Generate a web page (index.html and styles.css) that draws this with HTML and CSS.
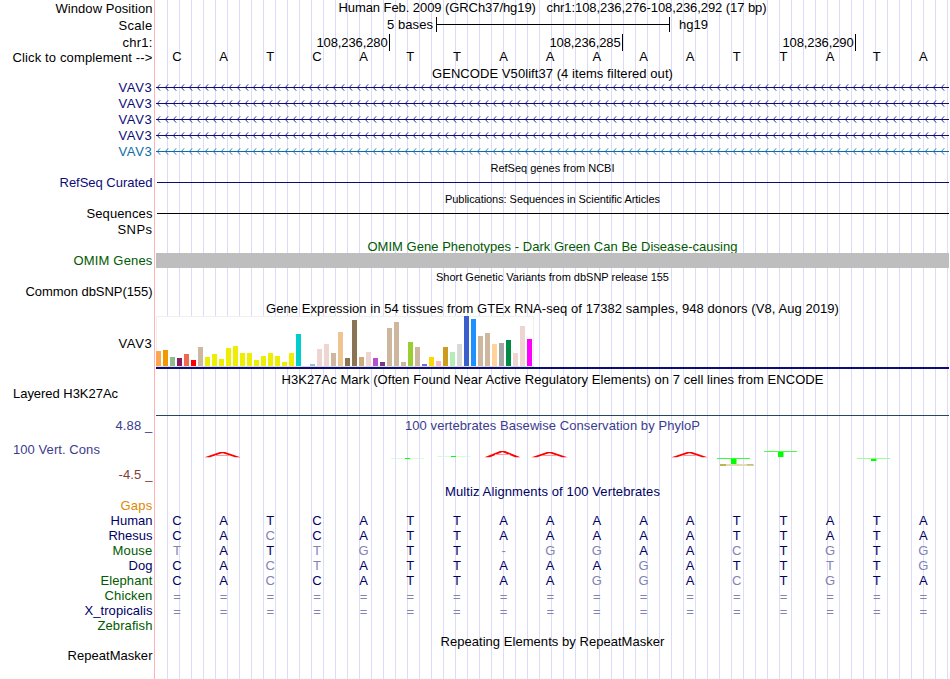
FILE: index.html
```html
<!DOCTYPE html>
<html lang="en">
<head>
  <meta charset="UTF-8" />
  <title>chr1:108,236,276-108,236,292</title>
  <link rel="stylesheet" href="styles.css">
</head>
<body>
  <div class="browser">
    <section class="track ruler">
      <div class="labels">
        <div class="label"><span data-w="97">Window Position</span></div>
        <div class="label"><span data-w="34">Scale</span></div>
        <div class="label"><span data-w="30">chr1:</span></div>
        <div class="label complement"><span data-w="140">Click to complement --&gt;</span></div>
      </div>
      <div class="data">
        <div class="title"><span data-w="428">Human Feb. 2009 (GRCh37/hg19)&nbsp;&nbsp; chr1:108,236,276-108,236,292 (17 bp)</span></div>
        <div class="scale">
          <span data-w="46">5 bases</span>
          <div class="scale-bar"></div>
          <span data-w="29">hg19</span>
        </div>
        <div class="positions">
          <div class="position"><span data-w="71">108,236,280</span></div>
          <div class="position"><span data-w="71">108,236,285</span></div>
          <div class="position"><span data-w="71">108,236,290</span></div>
        </div>
        <div class="bases black" data-seq="CATCATTAAAAATTATA"></div>
      </div>
    </section>

    <section class="track gencode">
      <div class="labels navy">
        <div class="label"><span data-w="34">VAV3</span></div>
        <div class="label"><span data-w="34">VAV3</span></div>
        <div class="label"><span data-w="34">VAV3</span></div>
        <div class="label"><span data-w="34">VAV3</span></div>
        <div class="label blue"><span data-w="34">VAV3</span></div>
      </div>
      <div class="data">
        <div class="title"><span data-w="241">GENCODE V50lift37 (4 items filtered out)</span></div>
        <svg class="gene" width="793" height="71">
          <defs>
            <pattern id="arrowsNavy" width="8" height="16" patternUnits="userSpaceOnUse">
              <path d="M4.2 .3 L1.3 3.5 L4.2 6.7" fill="none" stroke="#0c0c78" stroke-width=".85" />
              <rect y="3" width="8" height="1" fill="#0c0c78" />
            </pattern>
            <pattern id="arrowsBlue" width="8" height="16" patternUnits="userSpaceOnUse">
              <path d="M4.2 .3 L1.3 3.5 L4.2 6.7" fill="none" stroke="#0c6ca8" stroke-width=".85" />
              <rect y="3" width="8" height="1" fill="#0c6ca8" />
            </pattern>
          </defs>
          <rect width="793" height="64" fill="url(#arrowsNavy)" />
          <rect y="64" width="793" height="7" fill="url(#arrowsBlue)" />
        </svg>
      </div>
    </section>

    <section class="track refseq">
      <div class="labels navy">
        <div class="label"><span data-w="93">RefSeq Curated</span></div>
      </div>
      <div class="data">
        <div class="title small"><span data-w="124">RefSeq genes from NCBI</span></div>
        <div class="line navy-line"></div>
      </div>
    </section>

    <section class="track pubs">
      <div class="labels">
        <div class="label"><span data-w="66">Sequences</span></div>
        <div class="label"><span data-w="35">SNPs</span></div>
      </div>
      <div class="data">
        <div class="title small"><span data-w="215">Publications: Sequences in Scientific Articles</span></div>
        <div class="line"></div>
      </div>
    </section>

    <section class="track omim">
      <div class="labels green">
        <div class="label"><span data-w="79">OMIM Genes</span></div>
      </div>
      <div class="data">
        <div class="title green"><span data-w="370">OMIM Gene Phenotypes - Dark Green Can Be Disease-causing</span></div>
        <div class="omim-bar"></div>
      </div>
    </section>

    <section class="track dbsnp">
      <div class="labels">
        <div class="label"><span data-w="127">Common dbSNP(155)</span></div>
      </div>
      <div class="data">
        <div class="title small"><span data-w="233">Short Genetic Variants from dbSNP release 155</span></div>
      </div>
    </section>

    <section class="track gtex">
      <div class="labels">
        <div class="label"><span data-w="34">VAV3</span></div>
      </div>
      <div class="data">
        <div class="title"><span data-w="573">Gene Expression in 54 tissues from GTEx RNA-seq of 17382 samples, 948 donors (V8, Aug 2019)</span></div>
        <div class="bars" id="bars"></div>
        <div class="gtex-line"></div>
      </div>
    </section>

    <section class="track h3k27ac">
      <div class="labels">
        <div class="label left"><span data-w="105">Layered H3K27Ac</span></div>
      </div>
      <div class="data">
        <div class="title"><span data-w="542">H3K27Ac Mark (Often Found Near Active Regulatory Elements) on 7 cell lines from ENCODE</span></div>
        <div class="line slate-line"></div>
      </div>
    </section>

    <section class="track phylop">
      <div class="labels">
        <div class="label violet"><span data-w="37">4.88 _</span></div>
        <div class="label violet left"><span data-w="87">100 Vert. Cons</span></div>
        <div class="label maroon"><span data-w="34">-4.5 _</span></div>
      </div>
      <div class="data">
        <div class="title violet"><span data-w="295">100 vertebrates Basewise Conservation by PhyloP</span></div>
        <svg class="logo" width="793" height="20" viewBox="156 448 793 20">
          <g fill="#f00">
            <path d="M204.5 457.3 L220 452 H225 L240.5 457.3 H235 L223 453.2 H222 L210 457.3Z" />
            <path d="M484.5 457.3 L500 451 H505 L520.5 457.3 H515 L503 452.2 H502 L490 457.3Z" />
            <path d="M531.5 457.3 L547 452 H552 L567.5 457.3 H562 L550 453.2 H549 L537 457.3Z" />
            <path d="M671.5 457.3 L687 452 H692 L707.5 457.3 H702 L690 453.2 H689 L677 457.3Z" />
          </g>
          <g fill="#f99">
            <rect x="215" y="455" width="15" height="1" />
            <rect x="495" y="454" width="15" height="1" />
            <rect x="542" y="455" width="15" height="1" />
            <rect x="682" y="455" width="15" height="1" />
          </g>
          <g fill="#d8fcd8">
            <rect x="391" y="458" width="33" height="1" />
            <rect x="437" y="456" width="33" height="1" />
          </g>
          <g fill="#0f0">
            <rect x="405" y="458" width="5" height="1" />
            <rect x="451" y="456" width="5" height="1" />
            <rect x="731" y="458" width="5.5" height="6" />
            <rect x="778" y="451" width="5.5" height="6" />
            <rect x="871" y="458" width="5.5" height="3" />
          </g>
          <rect x="717" y="458" width="33" height="1" fill="#3f3" />
          <rect x="764" y="451" width="33" height="1" fill="#4f4" />
          <rect x="857" y="458" width="33" height="1" fill="#9f9" />
          <rect x="720" y="464" width="34" height="2" fill="#e2dcb4" />
          <rect x="720" y="464" width="6" height="2" fill="#beb650" />
          <rect x="747" y="464" width="6" height="1.5" fill="#c8c070" />
        </svg>
      </div>
    </section>

    <section class="track multiz">
      <div class="labels">
        <div class="label orange"><span data-w="32">Gaps</span></div>
        <div class="label dark"><span data-w="42">Human</span></div>
        <div class="label dark"><span data-w="44">Rhesus</span></div>
        <div class="label green"><span data-w="40">Mouse</span></div>
        <div class="label dark"><span data-w="24">Dog</span></div>
        <div class="label green"><span data-w="52">Elephant</span></div>
        <div class="label green"><span data-w="48">Chicken</span></div>
        <div class="label dark"><span data-w="68">X_tropicalis</span></div>
        <div class="label green"><span data-w="55">Zebrafish</span></div>
      </div>
      <div class="data">
        <div class="title dark"><span data-w="215">Multiz Alignments of 100 Vertebrates</span></div>
        <div class="alignment">
          <div class="bases" data-seq="CATCATTAAAAATTATA"></div>
          <div class="bases" data-seq="CACCATTAAAAATTATA"></div>
          <div class="bases" data-seq="TATTGTT-GGAACTGTG"></div>
          <div class="bases" data-seq="CACTATTAAAGATTTTG"></div>
          <div class="bases" data-seq="CACCATTAAGGACTGTA"></div>
          <div class="bases double" data-seq="================="></div>
          <div class="bases double" data-seq="================="></div>
        </div>
      </div>
    </section>

    <section class="track repeats">
      <div class="labels">
        <div class="label"><span data-w="85">RepeatMasker</span></div>
      </div>
      <div class="data">
        <div class="title"><span data-w="224">Repeating Elements by RepeatMasker</span></div>
      </div>
    </section>
  </div>

  <script src="script.js"></script>
</body>
</html>
```

FILE: styles.css
```css
html, body {
  margin: 0;
  padding: 0;
}
body {
  width: 950px;
  height: 679px;
  overflow: hidden;
  background: #fff;
  color: #000;
  font-family: "Liberation Sans", Arial, sans-serif;
  font-size: 13px;
  line-height: 15px;
}
svg {
  display: block;
}

/* pink edge of the label column, then a guide line every 12px */
.browser {
  width: 949px;
  height: 679px;
  background:
    linear-gradient(#ffb4b4, #ffb4b4) 154px 0 / 1px 100% no-repeat,
    repeating-linear-gradient(to right, #dcdcf8 0, #dcdcf8 1px, transparent 1px, transparent 12px) 167px 0 / 782px 100% no-repeat;
}
.track {
  display: flex;
}
.labels {
  width: 152.5px;
  margin-right: 3.5px;
  flex: none;
  box-sizing: border-box;
}
.label {
  height: 15px;
  text-align: right;
  white-space: pre;
}
.label.left {
  padding-left: 13px;
  text-align: left;
}
.data {
  width: 793px;
  flex: none;
}
.title {
  height: 15px;
  text-align: center;
  white-space: nowrap;
}
.title.small {
  height: 12px;
  font-size: 11px;
  line-height: 12px;
}
.line {
  height: 1px;
  margin-left: 1px;
  background: #000;
}

.navy { color: #0c0c78; }
.blue { color: #0c6ca8; }
.green { color: #005a00; }
.violet { color: #3c3c8c; }
.maroon { color: #823c3c; }
.orange { color: #e18700; }
.dark { color: #000064; }

.bases {
  display: grid;
  grid-template-columns: repeat(17, 1fr);
  width: 793px;
  height: 15px;
  margin-left: -2.3px;
  text-align: center;
  color: #000064;
}
.bases.black { color: #000; }
.bases .diff { color: #8282b4; }
.bases.double {
  line-height: 17px;
}

/* ruler */
.ruler { height: 65px; }
.ruler .labels { padding-top: 1px; }
.ruler .label { margin-bottom: 2px; }
.ruler .complement { margin-top: -2px; }
.scale {
  display: flex;
  height: 15px;
  margin-top: 2px;
  padding-left: 231px;
  white-space: nowrap;
}
.scale-bar {
  width: 232px;
  height: 15px;
  margin: 0 9px 0 3px;
  border: solid #000;
  border-width: 0 1px;
  background: linear-gradient(#000, #000) 0 7px / 100% 1px no-repeat;
}
.positions {
  display: grid;
  grid-template-columns: 234px 233px 233px;
  height: 14px;
  margin-top: 2px;
}
.position {
  padding-right: 1.5px;
  border-right: 1px solid #000;
  text-align: right;
  line-height: 17px;
}
.ruler .bases { margin-top: 1px; }

/* gencode */
.gencode { height: 96px; }
.gencode .labels { padding-top: 15px; }
.gencode .label { margin-bottom: 1px; }
.gencode .title { margin: 1px 0 3px; }

/* thin tracks */
.refseq { height: 31px; }
.refseq .labels { padding-top: 14px; }
.refseq .title { margin: 1px 0 8px; }
.navy-line { background: #0c0c78; }

.pubs { height: 46px; }
.pubs .labels { padding-top: 14px; }
.pubs .label { margin-bottom: 1px; }
.pubs .title { margin: 1px 0 8px; }

.omim { height: 31px; }
.omim .labels { padding-top: 15px; }
.omim .title { margin: 1px 0 -1px; }
.omim-bar {
  position: relative;
  height: 15px;
  background: #bebebe;
}

.dbsnp { height: 31px; }
.dbsnp .labels { padding-top: 15px; }
.dbsnp .title { margin-top: 2px; }

/* gtex */
.gtex { height: 71px; }
.gtex .labels { padding-top: 36px; }
.gtex .title { margin-top: 1px; }
.bars {
  display: flex;
  align-items: flex-end;
  gap: 2px;
  width: 378px;
  height: 51px;
  box-sizing: border-box;
  background: #fff;
  border-bottom: 1px solid #dcdcdc;
  box-shadow: inset -1px 1px #f0f0f0, inset 1px 0 #f0f0f0;
}
.bar {
  width: 5px;
}
.gtex-line {
  height: 2px;
  background: #0c0c78;
}

.h3k27ac { height: 45px; }
.h3k27ac .labels { padding-top: 15px; }
.h3k27ac .title { margin: 1px 0 28px; }
.h3k27ac .line {
  margin-left: 0;
  background: #28465f;
}

/* conservation */
.phylop { height: 66px; }
.phylop .labels { padding-top: 2px; }
.phylop .label { margin-bottom: 9px; }
.phylop .label.left { margin-bottom: 10px; }
.phylop .title { margin: 2px 0 15px; }

.multiz { height: 150px; }
.multiz .labels { padding-top: 16px; }
.multiz .title { margin: 2px 0 14px; }

.repeats { height: 47px; }
.repeats .labels { padding-top: 16px; }
.repeats .title { margin-top: 2px; }
```

FILE: script.js
```js
const REFERENCE = "CATCATTAAAAATTATA";

// tissue colour and bar height
const tissues = [
  ["#ffa54f", 15], ["#ee9a00", 16], ["#8fbc8f", 9], ["#8b1c62", 8], ["#ee6a50", 12], ["#ff0000", 6],
  ["#cdb79e", 19], ["#eeee00", 9], ["#eeee00", 12], ["#eeee00", 7], ["#eeee00", 18], ["#eeee00", 20],
  ["#eeee00", 13], ["#eeee00", 13], ["#eeee00", 6], ["#eeee00", 10], ["#eeee00", 13], ["#eeee00", 10],
  ["#eeee00", 4], ["#eeee00", 13], ["#00cdcd", 32], ["#ee82ee", 0], ["#9ac0cd", 2], ["#eed5d2", 17],
  ["#eed5d2", 22], ["#cdb79e", 13], ["#eec591", 34], ["#8b7355", 8], ["#8b7355", 46], ["#cdaa7d", 9],
  ["#eed5d2", 14], ["#b452cd", 8], ["#7a378b", 4], ["#cdb79e", 38], ["#cdb79e", 44], ["#cdb79e", 4],
  ["#9acd32", 24], ["#cdb79e", 19], ["#7a67ee", 2], ["#ffd700", 9], ["#ffb6c1", 5], ["#cd9b1d", 19],
  ["#b4eeb4", 14], ["#d9d9d9", 22], ["#3a5fcd", 50], ["#1e90ff", 47], ["#cdb79e", 30], ["#cdb79e", 33],
  ["#ffd39b", 22], ["#a6a6a6", 23], ["#008b45", 26], ["#eed5d2", 13], ["#eed5d2", 40], ["#ff00ff", 27],
];

const bars = document.getElementById("bars");
tissues.forEach(([color, height]) => {
  const bar = document.createElement("div");
  bar.className = "bar";
  bar.style.height = height + "px";
  bar.style.background = color;
  bars.appendChild(bar);
});

// bases that differ from human are drawn lighter
document.querySelectorAll(".bases").forEach(row => {
  [...row.dataset.seq].forEach((base, i) => {
    const cell = document.createElement("span");
    cell.textContent = base;
    if (base !== REFERENCE[i]) cell.className = "diff";
    row.appendChild(cell);
  });
});

// spread the letters of a text over its width
document.querySelectorAll("[data-w]").forEach(el => {
  const natural = el.getBoundingClientRect().width;
  const spacing = (el.dataset.w - natural) / el.textContent.length;
  el.style.letterSpacing = spacing.toFixed(3) + "px";
});
```
